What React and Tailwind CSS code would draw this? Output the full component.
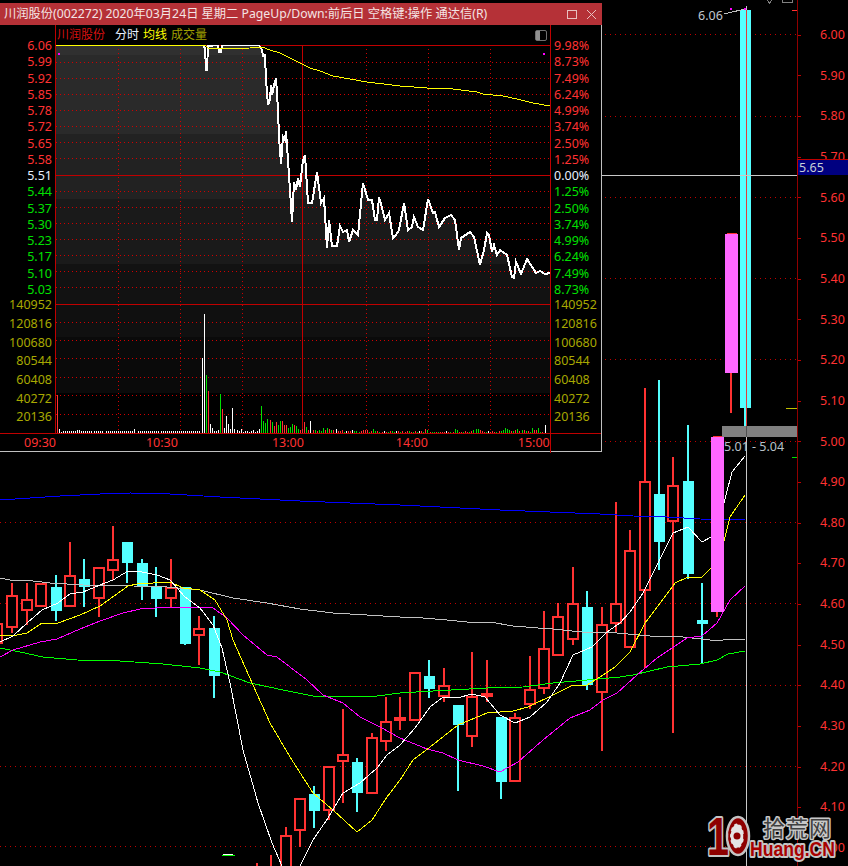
import React from "react";

const RED = "#ff3232";
const CYAN = "#54ffff";
const PINK = "#ff66ff";

// x, wick top, body top, body bottom, wick bottom, colour
const candles = [
  [-3, 610, 623, 644, 660, "r"],
  [12, 583, 595, 628, 633, "r"],
  [27, 583, 599, 611, 625, "r"],
  [41, 583, 583, 607, 607, "r"],
  [56, 575, 587, 611, 621, "c"],
  [70, 542, 575, 607, 607, "r"],
  [84, 559, 579, 587, 607, "c"],
  [99, 567, 567, 599, 617, "r"],
  [113, 526, 559, 571, 580, "r"],
  [127, 542, 542, 563, 583, "c"],
  [142, 559, 563, 587, 600, "c"],
  [156, 567, 587, 599, 617, "c"],
  [171, 559, 587, 599, 607, "r"],
  [185, 587, 587, 644, 645, "c"],
  [199, 616, 628, 636, 665, "r"],
  [214, 616, 628, 676, 698, "c"],
  [286, 827, 835, 880, 880, "r"],
  [300, 798, 798, 831, 847, "r"],
  [314, 786, 794, 811, 828, "c"],
  [329, 766, 766, 811, 820, "r"],
  [343, 709, 754, 762, 803, "r"],
  [357, 758, 762, 793, 812, "c"],
  [372, 733, 737, 794, 794, "r"],
  [386, 697, 721, 742, 751, "r"],
  [400, 697, 717, 721, 730, "r"],
  [415, 672, 672, 721, 721, "r"],
  [429, 660, 676, 689, 698, "c"],
  [444, 668, 685, 697, 702, "r"],
  [458, 705, 705, 725, 791, "c"],
  [472, 652, 696, 737, 747, "r"],
  [487, 660, 693, 697, 702, "r"],
  [501, 717, 717, 782, 799, "c"],
  [515, 713, 717, 782, 782, "r"],
  [530, 656, 689, 705, 709, "r"],
  [544, 611, 648, 689, 694, "r"],
  [558, 603, 616, 656, 656, "r"],
  [573, 567, 603, 640, 645, "r"],
  [587, 591, 607, 685, 690, "c"],
  [602, 607, 624, 693, 751, "r"],
  [616, 502, 603, 624, 633, "r"],
  [630, 530, 550, 648, 648, "r"],
  [645, 388, 481, 591, 668, "r"],
  [659, 380, 494, 542, 570, "c"],
  [673, 457, 485, 522, 733, "r"],
  [688, 425, 481, 574, 579, "c"],
  [702, 583, 620, 624, 664, "c"],
];

const ma5a = "0,642 13,636 27,623 42,610 58,603 70,594 83,592 100,585 113,580 128,571 142,572 157,575 170,580 185,597 200,608 213,625 222,648 230,683 243,750 258,803 272,843 282,866";
const ma5b = "300,866 313,840 328,818 343,793 360,783 377,768 387,755 400,745 415,728 430,707 443,697 457,698 472,694 485,697 500,715 515,723 530,717 547,702 560,683 573,655 592,647 607,632 620,623 630,612 643,593 658,563 673,533 688,527 702,542 711,537 724,503 732,472 745,456";
const ma10 = "0,636 17,635 27,633 42,623 58,623 80,615 100,606 128,586 137,584 170,582 183,588 200,590 215,600 227,620 233,640 253,685 270,723 290,757 313,793 333,810 357,832 372,820 387,797 400,780 413,760 430,747 458,725 487,713 513,711 528,707 553,695 573,685 587,685 600,677 615,667 630,652 645,623 670,590 675,583 688,577 702,577 711,568 724,541 730,517 745,495";
const ma20 = "0,657 13,650 40,642 57,639 80,629 100,621 123,613 140,609 170,607 200,607 213,608 227,618 243,635 267,655 277,657 307,680 323,695 343,703 360,717 380,727 400,738 427,749 443,753 458,760 483,766 500,772 518,762 543,740 570,718 590,710 603,700 617,693 637,675 657,658 687,638 702,636 717,623 730,600 745,586";
const ma60 = "0,578 10,580 33,581 50,583 83,585 133,586 167,587 200,590 233,598 267,603 300,609 333,613 400,617 423,618 447,620 467,622 490,622 513,626 538,628 553,629 582,632 600,632 617,633 650,636 683,637 710,640 723,640 745,639";
const maGreen = "0,648 20,652 43,657 77,660 120,661 163,664 200,668 220,672 250,683 283,690 313,696 377,696 400,693 433,691 487,688 523,687 553,683 587,680 620,677 633,675 667,667 700,664 717,660 728,654 745,651";
const maBlue = "0,500 30,498 60,496 100,494 130,493 170,494 220,497 280,500 300,501 400,505 500,510 600,514 633,516 667,517 700,519 745,520";

const priceLine = "56,45 203,45 205,48 206,70 207,70 208,46 218,45 219,52 221,52 222,45 259,45 262,50 263,56 265,55 266,80 268,105 270,100 271,85 272,95 274,85 276,78 278,110 279,137 281,164 283,137 285,140 286,131 288,160 290,190 292,222 294,182 296,190 298,178 300,187 303,160 305,155 308,203 312,203 317,172 321,203 324,198 327,248 329,220 332,246 337,246 340,226 343,232 347,230 349,242 353,230 358,235 363,183 368,200 372,200 375,220 377,220 379,197 382,208 385,220 389,213 393,238 396,235 399,230 404,203 408,230 412,227 414,217 418,227 423,230 428,199 433,213 435,212 439,227 445,218 451,215 455,220 459,250 461,238 470,232 474,237 480,265 484,250 487,233 489,235 492,252 494,245 497,255 500,250 507,255 512,277 514,278 516,262 521,274 527,259 536,273 540,271 545,274 550,273";
const avgLine = "56,45 205,45 208,48 215,49 250,48 262,47 270,50 280,53 290,58 300,63 310,68 320,71 333,76 350,79 367,82 400,86 427,88 453,89 477,92 483,94 503,96 517,99 533,103 550,106";

const bands = [
  [45, 10, "#303030"],
  [55, 79, "#2a2a2a"],
  [134, 65, "#222222"],
  [199, 65, "#1a1a1a"],
  [264, 40, "#121212"],
];

const barColors = { r: RED, g: "#00e000", w: "#ffffff" };

// [x, top, colour] for the bars that stand out
const bigBars = [
  [57, 395, "r"], [201.5, 358, "w"], [204, 314, "w"], [206, 375, "g"], [208, 391, "r"], [210, 424, "w"],
  [212, 428, "w"], [214, 431, "w"], [216, 431, "w"], [218, 430, "w"], [220, 394, "g"], [222, 409, "r"],
  [224, 428, "w"], [226, 416, "w"], [228, 424, "w"], [230, 429, "w"], [232, 408, "w"], [234, 429, "w"],
  [237, 430, "w"], [239, 431, "w"], [241, 429, "w"], [243, 432, "w"], [245, 431, "w"], [247, 431, "w"],
  [249, 432, "w"], [251, 431, "w"], [253, 430, "w"], [255, 432, "w"], [257, 431, "w"], [259, 429, "w"],
  [261, 406, "g"], [263, 421, "g"], [265, 423, "g"], [267, 419, "g"], [270, 420, "r"], [272, 422, "g"],
  [274, 426, "r"], [276, 422, "r"], [278, 425, "g"], [280, 421, "g"], [282, 421, "r"], [284, 425, "r"],
  [286, 425, "r"], [288, 428, "g"], [290, 427, "g"], [292, 424, "g"], [294, 425, "r"], [296, 426, "g"],
  [298, 429, "g"],
];

const lateBars = "r3 r4 r11 g6 r3 w12 r3 g3 r2 g3 g2 g5 r3 g5 r4 g3 r3 w4 r2 r2 r3 g1 w2 r2 r2 w3 g2 g2 g1 r2 r3 r3 r3 g1 r2 g4 g2 r2 g1 r1 w2 r1 g1 r2 g2 g1 w2 r2 g1 r2 r1 r2 g2 r1 g1 r2 g1 w2 r2 g1 r4 g3 r1 g1 g1 r1 g1 r1 r1 r1 w2 r1 g1 r1 g4 g3 r1 r1 g1 r2 r1 g1 r2 g3 g4 g4 r3 r2 r1 g1 w2 r1 r2 r1 g1 r2 g2 g3 g5 g4 g3 r2 g2 r3 g4 r2 g3 r3 g2 r2 g1 g5 r3 r3 g5 g1 r1 w8".split(" ");

const tinyHeights = { 0: 4, 1: 1, 8: 2, 9: 3, 10: 3, 11: 2, 22: 0, 37: 4, 38: 0 };

const priceRows = [
  ["6.06", "9.98%", "r"], ["5.99", "8.73%", "r"], ["5.92", "7.49%", "r"], ["5.85", "6.24%", "r"],
  ["5.78", "4.99%", "r"], ["5.72", "3.74%", "r"], ["5.65", "2.50%", "r"], ["5.58", "1.25%", "r"],
  ["5.51", "0.00%", "w"], ["5.44", "1.25%", "g"], ["5.37", "2.50%", "g"], ["5.30", "3.74%", "g"],
  ["5.23", "4.99%", "g"], ["5.17", "6.24%", "g"], ["5.10", "7.49%", "g"], ["5.03", "8.73%", "g"],
];
const rowColor = { r: "text-[#ff3232]", w: "text-[#e8f0ff]", g: "text-[#00e000]" };
const volRows = ["120816", "100680", "80544", "60408", "40272", "20136"];
const axisRows = ["6.00", "5.90", "5.80", "5.70", "5.60", "5.50", "5.40", "5.30", "5.20", "5.10", "5.00", "4.90", "4.80", "4.70", "4.60", "4.50", "4.40", "4.30", "4.20", "4.10", "4.00"];

const Candle = ({ c }) => {
  const [x, top, bodyTop, bodyBot, bottom, kind] = c;
  const color = kind === "r" ? RED : CYAN;
  return (
    <g>
      {top < bodyTop && <rect x={x - 1} y={top} width="2" height={bodyTop - top} fill={color} />}
      {bottom > bodyBot && <rect x={x - 1} y={bodyBot} width="2" height={bottom - bodyBot} fill={color} />}
      {kind === "r" ? (
        <rect x={x - 5} y={bodyTop + 1} width="10" height={bodyBot - bodyTop - 2} fill="#000" stroke={color} strokeWidth="2" />
      ) : (
        <rect x={x - 5.5} y={bodyTop} width="11" height={bodyBot - bodyTop} fill={color} />
      )}
    </g>
  );
};

const MainChart = () => {
  const grid = [34, 116, 197, 278, 359, 441, 522, 603, 685, 766, 846];
  return (
    <svg width="797" height="866" viewBox="0 0 797 866" shapeRendering="crispEdges" className="block shrink-0">
      {grid.map((y) => (
        <line key={y} x1="0" x2="797" y1={y + 0.5} y2={y + 0.5} stroke="#c00000" strokeDasharray="1 4" />
      ))}
      {candles.map((c) => (
        <Candle key={c[0]} c={c} />
      ))}
      <rect x="223" y="854" width="10" height="1" fill="#fff" />
      <rect x="222" y="855" width="13" height="1" fill="#00ff00" />
      <rect x="256" y="863" width="2" height="3" fill={RED} />
      <rect x="270" y="855" width="2" height="11" fill={RED} />
      <polyline points={maBlue} fill="none" stroke="#0000ff" />
      <polyline points={ma60} fill="none" stroke="#c0c0c0" />
      <polyline points={maGreen} fill="none" stroke="#00ff00" />
      <polyline points={ma20} fill="none" stroke="#ff00ff" />
      <polyline points={ma10} fill="none" stroke="#ffff00" />
      <polyline points={ma5a} fill="none" stroke="#ffffff" />
      <polyline points={ma5b} fill="none" stroke="#ffffff" />

      <rect x="716" y="612" width="2" height="5" fill={RED} />
      <rect x="713" y="436" width="10" height="1" fill={RED} />
      <rect x="711" y="437" width="13" height="175" fill={PINK} />
      <rect x="730" y="373" width="2" height="40" fill={RED} />
      <rect x="727" y="233" width="10" height="1" fill={RED} />
      <rect x="725" y="234" width="13" height="139" fill={PINK} />
      <rect x="744" y="408" width="3" height="18" fill={CYAN} />
      <rect x="740" y="10" width="11" height="398" fill={CYAN} />

      <rect x="746" y="10" width="1" height="416" fill="#e03c3c" />
      <rect x="746" y="6" width="1" height="4" fill="#c0c0c0" />
      <rect x="602" y="175" width="195" height="1" fill="#c8c8c8" />
      <rect x="722" y="426" width="75" height="11" fill="#808080" />
      <rect x="746" y="426" width="1" height="11" fill="#505050" />
      <rect x="746" y="437" width="1" height="429" fill="#c8c8c8" />

      <line x1="724" y1="14" x2="745" y2="9" stroke="#c0c0c0" />
      <rect x="730" y="8" width="2" height="2" fill="#ff00ff" />
      <rect x="744" y="8" width="2" height="2" fill="#ff00ff" />

      <rect x="786" y="408" width="11" height="1" fill="#c0c000" />
      <rect x="792" y="457" width="5" height="1" fill="#00e000" />
      <rect x="792" y="10" width="5" height="1" fill={RED} />
      <path d="M767 0 L769.5 3 L772 0" fill="none" stroke="#808080" />
      <path d="M782.5 0 V2.5 H792.5 V0" fill="none" stroke="#808080" />
    </svg>
  );
};

const PopupChart = () => {
  const hGrid = [62, 78, 94, 110, 126, 142, 158, 191, 207, 223, 239, 255, 271, 287, 322, 340, 358, 377, 395, 414];
  const vGrid = [118, 180, 242, 366, 428, 490];
  return (
    <svg width="494" height="388" viewBox="56 45 494 388" shapeRendering="crispEdges" className="block">
      <defs>
        <clipPath id="under-price">
          <polygon points={`${priceLine} 550,304 56,304`} />
        </clipPath>
      </defs>
      <g clipPath="url(#under-price)">
        {bands.map(([y, h, fill]) => (
          <rect key={y} x="56" y={y} width="494" height={h} fill={fill} />
        ))}
      </g>
      <rect x="56" y="304" width="494" height="33" fill="#101010" />
      <rect x="56" y="337" width="494" height="56" fill="#0a0a0a" />
      {hGrid.map((y) => (
        <line key={y} x1="56" x2="550" y1={y + 0.5} y2={y + 0.5} stroke="#d00000" strokeDasharray="1 3" />
      ))}
      {vGrid.map((x) => (
        <line key={x} x1={x + 0.5} x2={x + 0.5} y1="45" y2="433" stroke="#d00000" strokeDasharray="1 3" />
      ))}
      <rect x="56" y="45" width="494" height="1" fill="#c00000" />
      <rect x="56" y="175" width="494" height="1" fill="#c00000" />
      <rect x="56" y="304" width="494" height="1" fill="#c00000" />
      <rect x="302" y="45" width="1" height="388" fill="#c00000" />
      {Array.from({ length: 70 }, (_, i) => {
        const h = tinyHeights[i] ?? 2;
        return <rect key={i} x={59 + i * 2.03} y={433 - h} width="1" height={h} fill="#fff" />;
      })}
      {bigBars.map(([x, top, k]) => (
        <rect key={x} x={x} y={top} width="1" height={433 - top} fill={barColors[k]} />
      ))}
      {lateBars.map((b, i) => {
        const h = Number(b.slice(1));
        return <rect key={i} x={300 + i * 2.09} y={433 - h} width="1" height={h} fill={barColors[b[0]]} />;
      })}
      <polyline points={priceLine} fill="none" stroke="#fff" strokeWidth="2" />
      <polyline points={avgLine} fill="none" stroke="#ffff00" />
      <rect x="58" y="53" width="2" height="2" fill="#ff00ff" />
      <rect x="543" y="53" width="2" height="2" fill="#ff00ff" />
    </svg>
  );
};

const VolumeRows = () => (
  <>
    <div className="h-[13px] leading-[13px] text-[#a8a800]">140952</div>
    <div className="mt-[4px]">
      {volRows.map((v) => (
        <div key={v} className="h-[18.7px] leading-[18.7px] text-[#a8a800]">{v}</div>
      ))}
    </div>
  </>
);

const IntradayWindow = () => (
  <div className="absolute left-0 top-[3px] w-[602px] h-[449px] flex flex-col bg-black border-r border-b border-[#c0c0c0]">
    <div className="h-[22px] w-[602px] shrink-0 flex items-center justify-between bg-[#b53137] pl-[4px] text-[12.25px] text-[#f4e4e4] whitespace-nowrap">
      <span>川润股份(002272) 2020年03月24日 星期二 PageUp/Down:前后日 空格键:操作 通达信(R)</span>
      <div className="flex items-center gap-[10px] pr-[6px]">
        <div className="w-[10px] h-[9px] border border-[#e8c0c0]" />
        <svg width="9" height="9" viewBox="0 0 9 9" stroke="#e8c0c0" fill="none">
          <path d="M0 0 L9 9 M9 0 L0 9" />
        </svg>
      </div>
    </div>
    <div className="h-[408px] shrink-0 flex">
      <div className="w-[56px] shrink-0 border-r border-[#c00000] pt-[13px] pr-[3px] text-right">
        {priceRows.map(([p, , k]) => (
          <div key={p} className={`h-[16.25px] leading-[16.25px] ${rowColor[k]}`}>{p}</div>
        ))}
        <VolumeRows />
      </div>
      <div className="w-[494px] shrink-0 flex flex-col">
        <div className="h-[20px] flex items-center text-[12px] pl-[1px] pr-[3px]">
          <span className="text-[#d81010] w-[58px]">川润股份</span>
          <span className="text-[#e8f0ff] w-[28px]">分时</span>
          <span className="text-[#ffff00] w-[28px]">均线</span>
          <span className="text-[#a0a000]">成交量</span>
          <div className="ml-auto w-[12px] h-[11px] rounded-[2px] border border-[#707070] flex">
            <div className="w-[4px] bg-[#909090]" />
          </div>
        </div>
        <PopupChart />
      </div>
      <div className="w-[51px] shrink-0 border-l border-[#c00000] pt-[13px] pl-[3px]">
        {priceRows.map(([p, pct, k]) => (
          <div key={p} className={`h-[16.25px] leading-[16.25px] ${rowColor[k]}`}>{pct}</div>
        ))}
        <VolumeRows />
      </div>
    </div>
    <div className="flex-1 flex border-t border-[#c00000] text-[#ff3232]">
      <div className="w-[550px] shrink-0 flex items-center">
        <span className="ml-[24px]">09:30</span>
        <span className="ml-[90px]">10:30</span>
        <span className="ml-[94px]">13:00</span>
        <span className="ml-[92px]">14:00</span>
        <span className="ml-[90px]">15:00</span>
      </div>
      <div className="flex-1 border-l border-[#c00000]" />
    </div>
  </div>
);

const PriceAxis = () => (
  <div className="w-[51px] shrink-0 border-l border-[#900000] pt-[15px] text-[#ff3232]">
    {axisRows.map((v) => (
      <div key={v} className="h-[40.67px] flex items-center">
        <div className="w-[3px] h-px bg-[#c00000]" />
        <span className="ml-[19px]">{v}</span>
      </div>
    ))}
  </div>
);

const Watermark = () => (
  <svg width="140" height="54" viewBox="700 812 140 54" className="absolute left-[700px] top-[812px]">
    <g fontFamily="'Liberation Sans', sans-serif" fontWeight="700" stroke="#c4c4c4" paintOrder="stroke" strokeLinejoin="round">
      <text x="707" y="855" fontSize="54" fill="#8e0000" strokeWidth="4" textLength="22" lengthAdjust="spacingAndGlyphs">1</text>
      <text x="750" y="856" fontSize="21" fill="#a80000" strokeWidth="4" textLength="85" lengthAdjust="spacingAndGlyphs">Huang.CN</text>
    </g>
    <text x="763" y="836" fontSize="22" fill="#404040" stroke="#c8c8c8" strokeWidth="3" paintOrder="stroke" strokeLinejoin="round" fontFamily="'Noto Sans CJK SC', sans-serif" textLength="68">拾荒网</text>
    <ellipse cx="738" cy="836" rx="11" ry="19" fill="#8e0000" stroke="#c4c4c4" strokeWidth="2.5" />
    <ellipse cx="737" cy="836" rx="7" ry="12.5" fill="#e4e4e4" />
    <ellipse cx="737" cy="836" rx="7.5" ry="13" fill="none" stroke="#8e0000" strokeWidth="2.5" strokeDasharray="3 4" />
    <circle cx="737" cy="836" r="3.5" fill="#8e0000" />
  </svg>
);

export default function App() {
  return (
    <div className="relative w-[848px] h-[866px] overflow-hidden bg-black flex text-[12.5px] font-['Noto_Sans','Noto_Sans_CJK_SC',sans-serif]">
      <MainChart />
      <PriceAxis />
      <IntradayWindow />
      <div className="absolute left-[698px] top-[8px] text-[#c0c8d0] leading-[16px]">6.06</div>
      <div className="absolute left-[724px] top-[439px] text-[#b8c0c8] leading-[16px] whitespace-pre">5.01 - 5.04</div>
      <div className="absolute left-[797px] top-[159px] w-[51px] h-[16px] bg-[#000080] border-t border-l border-[#c00000] text-[#c8d0d8] leading-[15px] pl-[1px]">5.65</div>
      <Watermark />
    </div>
  );
}
